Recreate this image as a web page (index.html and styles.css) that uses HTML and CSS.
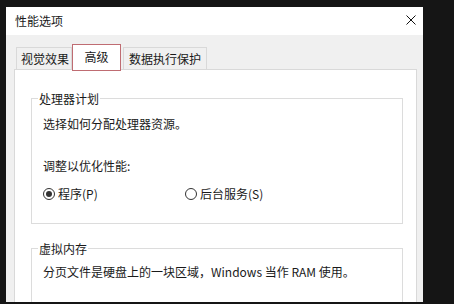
FILE: index.html
```html
<!DOCTYPE html>
<html lang="zh-CN">
<head>
<meta charset="utf-8">
<title>性能选项</title>
<link rel="stylesheet" href="styles.css">
</head>
<body>
<div class="dialog">
  <div class="titlebar">
    <span class="title">性能选项</span>
    <svg class="close" width="10" height="10" viewBox="0 0 10 10"><path d="M0.5 0.5 L9.5 9.5 M9.5 0.5 L0.5 9.5" stroke="#111" stroke-width="1" fill="none"/></svg>
  </div>
  <div class="content">
    <div class="tabs">
      <div class="tab tab-visual">视觉效果</div>
      <div class="tab tab-active">高级</div>
      <div class="tab tab-dep">数据执行保护</div>
    </div>
    <div class="panel">
      <div class="group">
        <div class="group-title">处理器计划</div>
        <div class="line first">选择如何分配处理器资源。</div>
        <div class="line adjust">调整以优化性能:</div>
        <div class="radios">
          <div class="radio radio-program"><span class="dot checked"></span>程序(P)</div>
          <div class="radio"><span class="dot"></span>后台服务(S)</div>
        </div>
      </div>
      <div class="group group-vm">
        <div class="group-title">虚拟内存</div>
        <div class="line vm-text">分页文件是硬盘上的一块区域，Windows 当作 RAM 使用。</div>
      </div>
    </div>
  </div>
</div>
</body>
</html>
```
FILE: styles.css
```css
html, body {
  margin: 0;
  padding: 0;
}
body {
  width: 454px;
  height: 304px;
  overflow: hidden;
  background: #151515;
  font-family: "Noto Sans CJK SC", "Noto Sans", sans-serif;
  font-size: 12px;
  line-height: 16px;
  color: #1a1a1a;
}
.dialog {
  margin: 7px 0 0 6px;
  width: 417px;
  height: 295px;
  background: #f0f0f0;
  overflow: hidden;
  display: flex;
  flex-direction: column;
}
.titlebar {
  height: 28px;
  flex: none;
  background: #ffffff;
  display: flex;
  align-items: center;
  justify-content: space-between;
  padding: 0 7px 0 9px;
}
.close {
  margin-top: -2px;
}
.content {
  flex: 1;
  display: flex;
  flex-direction: column;
  padding: 0 6px 0 8px;
}
.tabs {
  margin-top: 9px;
  margin-bottom: -2px;
  padding-left: 2px;
  display: flex;
  align-items: flex-end;
  position: relative;
  z-index: 1;
}
.tab {
  box-sizing: border-box;
  height: 22px;
  margin-bottom: 2px;
  border: 1px solid #d9d9d9;
  border-bottom: none;
  background: #f0f0f0;
  padding-top: 3px;
  text-align: center;
}
.tab-visual {
  width: 56px;
  padding-left: 2px;
}
.tab-active {
  width: 49px;
  height: 27px;
  margin-bottom: 0;
  border: 1px solid #bf6c72;
  background: #ffffff;
  padding-top: 4px;
}
.tab-dep {
  width: 84px;
  margin-left: 2px;
}
.panel {
  flex: 1;
  background: #ffffff;
  border: 1px solid #d9d9d9;
  padding: 28px 13px 0 16px;
}
.group {
  border: 1px solid #dcdcdc;
  padding: 0 10px 21px 11px;
}
.group-title {
  width: max-content;
  margin: -8px 0 0 -5px;
  padding: 0 1px;
  background: #ffffff;
}
.line.first {
  margin-top: 9px;
}
.line.adjust {
  margin-top: 26px;
}
.radios {
  margin-top: 12px;
  display: flex;
  align-items: center;
}
.radio {
  display: flex;
  align-items: center;
}
.radio-program {
  width: 142px;
}
.dot {
  box-sizing: border-box;
  width: 12px;
  height: 12px;
  border: 1px solid #333333;
  border-radius: 50%;
  margin-right: 3px;
  display: flex;
  align-items: center;
  justify-content: center;
}
.dot.checked::after {
  content: "";
  width: 6px;
  height: 6px;
  border-radius: 50%;
  background: #333333;
}
.group-vm {
  margin-top: 24px;
  padding-bottom: 40px;
}
.line.vm-text {
  margin-top: 7px;
}
```
